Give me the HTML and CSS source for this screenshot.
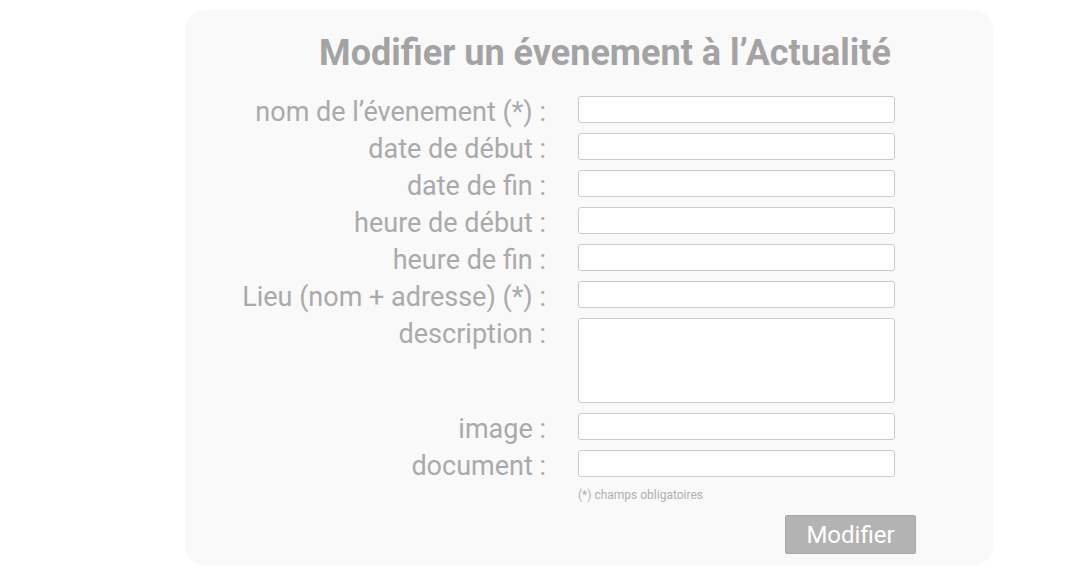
FILE: index.html
```html
<!DOCTYPE html>
<html lang="fr">
<head>
<meta charset="utf-8">
<title>Modifier un évenement</title>
<link rel="stylesheet" href="styles.css">
</head>
<body>
<div class="card">
  <h1 class="title">Modifier un évenement à l’Actualité</h1>
  <form class="form">
    <label class="lbl">nom de l’évenement (*) :</label><input class="field" type="text">
    <label class="lbl">date de début :</label><input class="field" type="text">
    <label class="lbl">date de fin :</label><input class="field" type="text">
    <label class="lbl">heure de début :</label><input class="field" type="text">
    <label class="lbl">heure de fin :</label><input class="field" type="text">
    <label class="lbl">Lieu (nom + adresse) (*) :</label><input class="field" type="text">
    <label class="lbl">description :</label><textarea class="field area"></textarea>
    <label class="lbl">image :</label><input class="field" type="text">
    <label class="lbl">document :</label><input class="field" type="text">
    <span></span><p class="note">(*) champs obligatoires</p>
  </form>
  <div class="actions"><button class="btn" type="button">Modifier</button></div>
</div>
</body>
</html>
```

FILE: styles.css
```css
html, body {
  margin: 0;
  padding: 0;
  background: #ffffff;
  font-family: Roboto, "Liberation Sans", sans-serif;
}
.card {
  box-sizing: border-box;
  margin: 10px 0 0 185px;
  width: 808px;
  height: 555px;
  border-radius: 20px;
  background: #f9f9f9;
  padding-top: 23px;
}
.title {
  margin: 0 0 0 32px;
  text-align: center;
  font-size: 36px;
  font-weight: 700;
  line-height: 40px;
  color: #a3a3a3;
}
.form {
  display: grid;
  grid-template-columns: 361px 317px;
  column-gap: 32px;
  row-gap: 10px;
  align-items: start;
  margin-top: 23px;
}
.lbl {
  text-align: right;
  font-size: 27px;
  line-height: 32px;
  margin-bottom: -5px;
  color: #aaaaaa;
  white-space: nowrap;
}
.field {
  box-sizing: border-box;
  display: block;
  width: 317px;
  height: 27px;
  margin: 0;
  border: 1px solid #cccccc;
  border-radius: 3px;
  background: #ffffff;
  resize: none;
}
.area {
  height: 85px;
}
.note {
  margin: 1px 0 0 0;
  font-size: 12px;
  line-height: 14px;
  color: #b0b0b0;
}
.actions {
  display: flex;
  justify-content: flex-end;
  padding-right: 77px;
  margin-top: 13px;
}
.btn {
  width: 131px;
  height: 39px;
  border: 1px solid #a8a8a8;
  border-radius: 2px;
  background: #b3b3b3;
  color: #ffffff;
  font-family: Roboto, "Liberation Sans", sans-serif;
  font-size: 24px;
  padding: 0;
}
```
